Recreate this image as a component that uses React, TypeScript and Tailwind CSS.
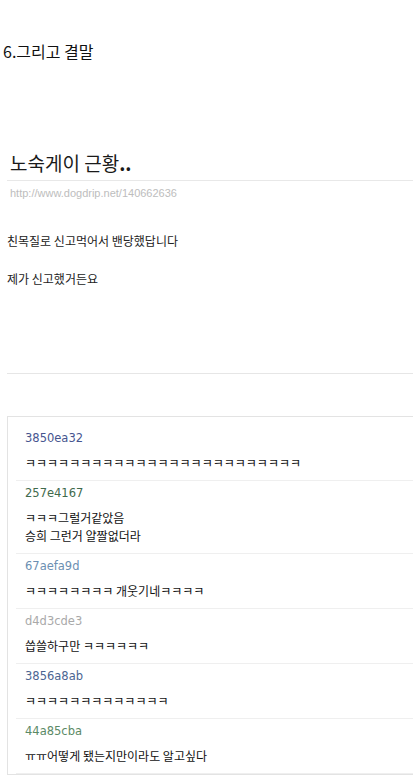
import React from "react";

const KR = { fontFamily: '"Noto Sans CJK KR", "Noto Sans", sans-serif' };
const VER = { fontFamily: '"DejaVu Sans", Verdana, sans-serif' };

const comments: { id: string; color: string; lines: string[] }[] = [
  { id: "3850ea32", color: "#46558f", lines: ["ㅋㅋㅋㅋㅋㅋㅋㅋㅋㅋㅋㅋㅋㅋㅋㅋㅋㅋㅋㅋㅋㅋㅋㅋㅋ"] },
  { id: "257e4167", color: "#3f6a4c", lines: ["ㅋㅋㅋ그럴거같았음", "승희 그런거 얄짤없더라"] },
  { id: "67aefa9d", color: "#6c8fb2", lines: ["ㅋㅋㅋㅋㅋㅋㅋㅋ 개웃기네ㅋㅋㅋㅋ"] },
  { id: "d4d3cde3", color: "#a9a9a9", lines: ["씁쓸하구만 ㅋㅋㅋㅋㅋㅋ"] },
  { id: "3856a8ab", color: "#4c6592", lines: ["ㅋㅋㅋㅋㅋㅋㅋㅋㅋㅋㅋㅋㅋ"] },
  { id: "44a85cba", color: "#5b8a66", lines: ["ㅠㅠ어떻게 됐는지만이라도 알고싶다"] },
];

export default function App() {
  return (
    <div className="w-[413px] h-[775px] overflow-hidden bg-white text-[#111]" style={KR}>
      <div className="pt-[41px] pl-[3px] text-[16px] leading-[20px] text-[#111]">6.그리고 결말</div>

      <div className="mt-[90px] ml-[7px]">
        <div className="pl-[3px] text-[19px] leading-[24px] text-[#1a1a1a] pb-[5px] border-b border-[#e8e8e8]">
          노숙게이 근황<span className="font-bold">..</span>
        </div>
        <div
          className="mt-[5px] pl-[3px] text-[11px] leading-[14px] text-[#bdbdbd]"
          style={{ fontFamily: '"Liberation Sans", Arial, sans-serif' }}
        >
          http://www.dogdrip.net/140662636
        </div>
      </div>

      <div className="mt-[33px] pl-[7px] text-[12px] leading-[16px] text-[#222]">친목질로 신고먹어서 밴당했답니다</div>
      <div className="mt-[22px] pl-[7px] text-[12px] leading-[16px] text-[#222]">제가 신고했거든요</div>

      <div className="mt-[86px] ml-[7px] border-t border-[#e6e6e6]" />

      <div className="mt-[42px] ml-[7px] mr-[-20px] border border-[#e3e3e3] pt-[9px]">
        {comments.map((c) => (
          <div key={c.id} className="ml-[8px] pl-[9px] pt-[4px] pb-[8px] border-b border-[#efefef]">
            <div className="text-[11.5px] leading-[16px]" style={{ ...VER, color: c.color }}>
              {c.id}
            </div>
            <div className="mt-[8px] text-[12px] leading-[18px] text-[#111]">
              {c.lines.map((l, i) => (
                <div key={i}>{l}</div>
              ))}
            </div>
          </div>
        ))}
      </div>
    </div>
  );
}
